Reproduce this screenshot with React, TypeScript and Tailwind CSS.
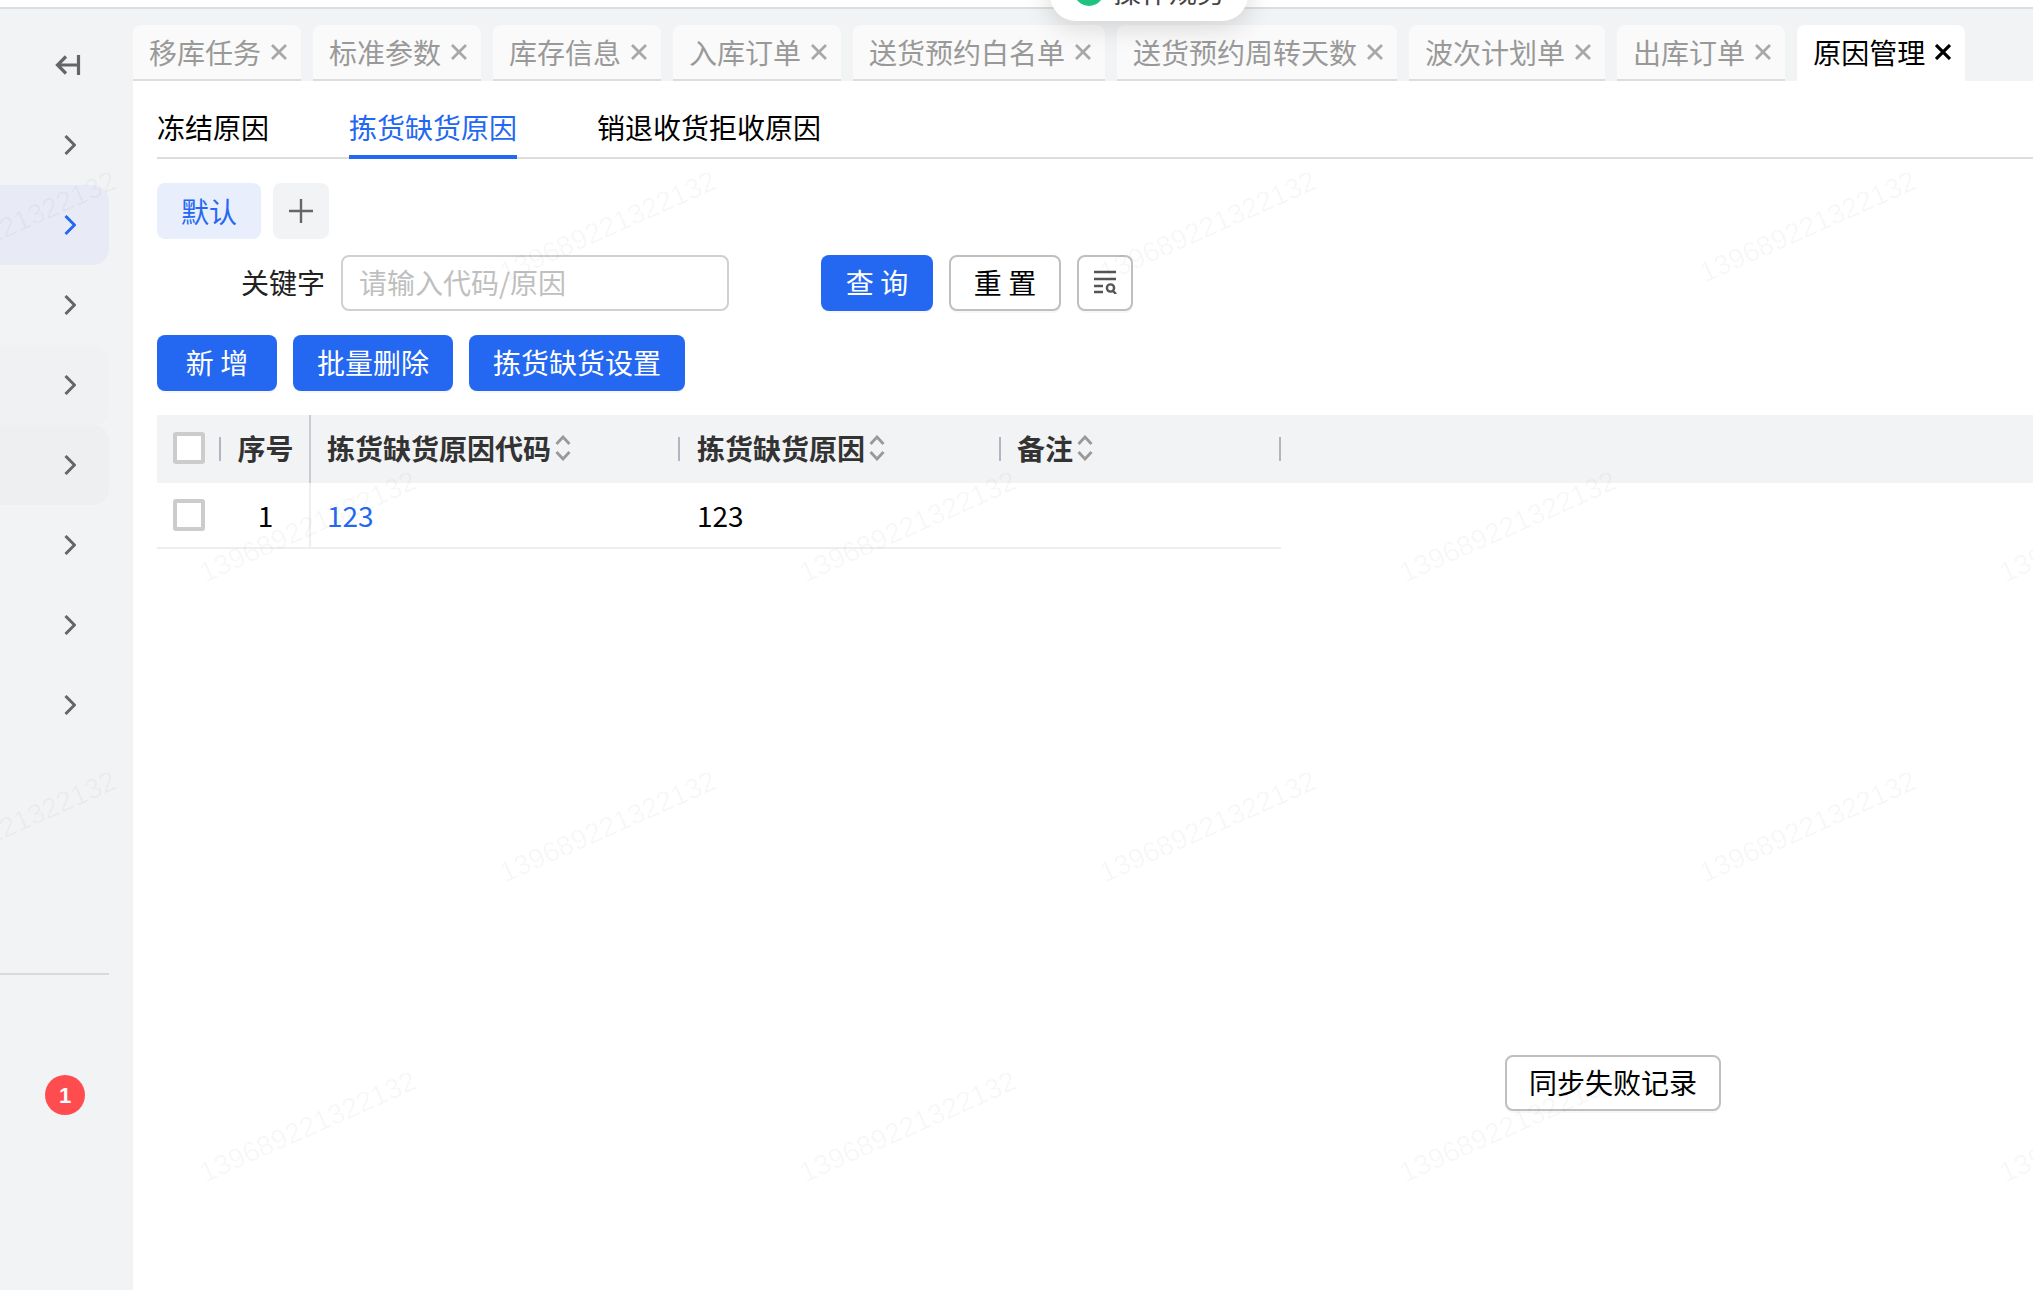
const tabs = [
  { label: '移库任务' },
  { label: '标准参数' },
  { label: '库存信息' },
  { label: '入库订单' },
  { label: '送货预约白名单' },
  { label: '送货预约周转天数' },
  { label: '波次计划单' },
  { label: '出库订单' },
  { label: '原因管理', active: true },
];

const sideRows = [
  '',
  'bg-[#e8ebf6]',
  '',
  'bg-[#f0f1f3]',
  'bg-[#eeeff1]',
  '',
  '',
  '',
];

const marks = [
  'left-[8px] top-[227px]',
  'left-[608px] top-[227px]',
  'left-[1208px] top-[227px]',
  'left-[1808px] top-[227px]',
  'left-[308px] top-[527px]',
  'left-[908px] top-[527px]',
  'left-[1508px] top-[527px]',
  'left-[2108px] top-[527px]',
  'left-[8px] top-[827px]',
  'left-[608px] top-[827px]',
  'left-[1208px] top-[827px]',
  'left-[1808px] top-[827px]',
  'left-[308px] top-[1127px]',
  'left-[908px] top-[1127px]',
  'left-[1508px] top-[1127px]',
  'left-[2108px] top-[1127px]',
];

const btnBase = 'h-14 pb-0.5 rounded-lg flex items-center justify-center text-[28px] shadow-[0_2px_0_rgba(0,0,0,0.03)] whitespace-pre';
const btnBlue = `${btnBase} bg-[#2468f2] text-white`;
const btnPlain = `${btnBase} bg-white text-black border-2 border-[#bfbfbf]`;

const Chevron = ({ active }: { active?: boolean }) => (
  <svg width="12" height="20" viewBox="0 0 12 20" fill="none" stroke={active ? '#2468f2' : '#666666'} strokeWidth="3">
    <path d="M1.5 1 L10.5 10 L1.5 19" />
  </svg>
);

const Close = ({ active }: { active?: boolean }) => (
  <svg width="16" height="16" viewBox="0 0 16 16" fill="none" stroke={active ? '#000000' : '#a8a8a8'} strokeWidth={active ? 3.2 : 2.8}>
    <path d="M1 1 L15 15 M15 1 L1 15" />
  </svg>
);

const Sorter = () => (
  <svg className="ml-1 shrink-0" width="16" height="26" viewBox="0 0 16 26" fill="none" stroke="#999999" strokeWidth="2.8">
    <path d="M1.5 9 L8 2 L14.5 9" />
    <path d="M1.5 17 L8 24 L14.5 17" />
  </svg>
);

const Checkbox = () => <div className="w-8 h-8 bg-white border-4 border-[#cccccc] rounded-[3px]" />;

const HeadDivider = () => <i className="block h-6 w-0.5 bg-[#b0b5c0] shrink-0" />;

export default function App() {
  return (
    <div className="relative w-[2033px] h-[1290px] overflow-hidden bg-white font-['Noto_Sans_CJK_SC','Noto_Sans',sans-serif] flex flex-col">
      <div className="h-[9px] shrink-0 bg-white border-b-2 border-[#dddddd]" />

      <div className="flex flex-1 min-h-0">
        {/* left menu, collapsed */}
        <aside className="w-[133px] shrink-0 bg-[#f2f3f5] flex flex-col">
          <div className="h-24 pt-[46px] pl-[55px]">
            <svg width="26" height="20" viewBox="0 0 26 20" fill="none" stroke="#666666" strokeWidth="3.2">
              <path d="M11 1.5 L2.5 10 L11 18.5 M2.5 10 H23 M23.5 0 V20" />
            </svg>
          </div>
          {sideRows.map((bg, i) => (
            <div key={i} className={`w-[109px] h-20 rounded-r-2xl flex items-center justify-end pr-[33px] ${bg}`}>
              <Chevron active={i === 1} />
            </div>
          ))}
          <div className="w-[109px] h-0.5 bg-[#d9d9d9] mt-[228px]" />
          <div className="mt-[100px] ml-[45px] w-10 h-10 rounded-full bg-[#ff4d4f] text-white text-[22px] font-bold font-['Liberation_Sans',sans-serif] flex items-center justify-center">
            1
          </div>
        </aside>

        <div className="flex-1 min-w-0 flex flex-col">
          <div className="h-[72px] shrink-0 bg-[#f2f3f5] pt-4 flex gap-3">
            {tabs.map(tab => (
              <div
                key={tab.label}
                className={`h-14 pl-4 pr-[14px] rounded-t-lg flex items-center gap-[10px] text-[28px] whitespace-nowrap border-b-2 ${
                  tab.active ? 'bg-white text-black border-transparent' : 'bg-[#fafafa] text-[#999999] border-[#dddddd]'
                }`}
              >
                {tab.label}
                <Close active={tab.active} />
              </div>
            ))}
          </div>

          <main className="flex-1 pl-6 flex flex-col items-start">
            <div className="w-full h-[78px] shrink-0 border-b-2 border-[#dddddd] flex items-end gap-20 text-[28px]">
              <div className="h-[62px] -mb-0.5 pt-px border-b-4 border-transparent text-black flex items-center">冻结原因</div>
              <div className="h-[62px] -mb-0.5 pt-px border-b-4 border-[#2468f2] text-[#2468f2] flex items-center">拣货缺货原因</div>
              <div className="h-[62px] -mb-0.5 pt-px border-b-4 border-transparent text-black flex items-center">销退收货拒收原因</div>
            </div>

            <div className="mt-6 flex gap-3">
              <div className="w-[104px] h-14 rounded-lg bg-[#e8eefc] text-[#2468f2] text-[28px] flex items-center justify-center">默认</div>
              <div className="w-14 h-14 rounded-lg bg-[#f2f3f5] flex items-center justify-center">
                <svg width="24" height="24" viewBox="0 0 24 24" fill="none" stroke="#666666" strokeWidth="2.4">
                  <path d="M12 0 V24 M0 12 H24" />
                </svg>
              </div>
            </div>

            <div className="mt-4 flex items-center">
              <label className="w-[168px] pb-0.5 text-right text-[28px] text-[#222222]">关键字</label>
              <div className="ml-4 w-[388px] h-14 pb-0.5 rounded-lg border-2 border-[#d0d0d0] pl-4 flex items-center text-[28px] text-[#bfbfbf]">
                请输入代码/原因
              </div>
              <button className={`${btnBlue} ml-[92px] w-28`}>查 询</button>
              <button className={`${btnPlain} ml-4 w-28`}>重 置</button>
              <button className={`${btnPlain} ml-4 w-14`}>
                <svg width="24" height="24" viewBox="0 0 24 24" fill="none" stroke="#555555" strokeWidth="2.4">
                  <path d="M1 2 H23 M1 9 H23 M1 16 H10 M1 22 H10" />
                  <circle cx="17.5" cy="18" r="3.6" />
                  <path d="M20 21 L23 24" />
                </svg>
              </button>
            </div>

            <div className="mt-6 flex gap-4">
              <button className={`${btnBlue} w-[120px]`}>新 增</button>
              <button className={`${btnBlue} w-40`}>批量删除</button>
              <button className={`${btnBlue} w-[216px]`}>拣货缺货设置</button>
            </div>

            <div className="mt-6 w-full">
              <div className="h-[68px] bg-[#f2f3f5] flex items-center text-[28px] font-bold text-[#333333]">
                <div className="w-16 h-full pl-4 flex items-center justify-between">
                  <div className="mb-0.5">
                    <Checkbox />
                  </div>
                  <HeadDivider />
                </div>
                <div className="w-[90px] h-full pb-0.5 pl-px border-r-2 border-[#c8ccd4] flex items-center justify-center">序号</div>
                <div className="w-[369px] h-full pl-4 flex items-center justify-between">
                  <span className="flex items-center pb-0.5">拣货缺货原因代码<Sorter /></span>
                  <HeadDivider />
                </div>
                <div className="w-[321px] h-full pl-[17px] flex items-center justify-between">
                  <span className="flex items-center pb-0.5">拣货缺货原因<Sorter /></span>
                  <HeadDivider />
                </div>
                <div className="w-[280px] h-full pl-4 flex items-center justify-between">
                  <span className="flex items-center pb-0.5">备注<Sorter /></span>
                  <HeadDivider />
                </div>
              </div>
              <div className="w-[1124px] h-[66px] border-b-2 border-[#eeeeee] flex items-center text-[28px] text-black">
                <div className="w-16 h-full pl-4 flex items-center">
                  <Checkbox />
                </div>
                <div className="w-[90px] h-full pl-px border-r-2 border-[#eeeeee] flex items-center justify-center">1</div>
                <div className="w-[369px] pl-4 text-[#2468f2]">123</div>
                <div className="w-[321px] pl-[17px]">123</div>
                <div className="w-[280px] pl-4" />
              </div>
            </div>

            <button className={`${btnPlain} mt-[506px] ml-[1348px] w-[216px]`}>同步失败记录</button>
          </main>
        </div>
      </div>

      {/* floating help pill, cut off by the window top */}
      <div className="absolute left-[1050px] top-[-35px] w-[198px] h-14 pb-1 rounded-[26px] bg-white shadow-[0_4px_28px_rgba(0,0,0,0.16)] pl-6 flex items-center gap-[9px] text-[28px] text-[#444444]">
        <span className="w-[30px] h-[30px] rounded-full bg-[#1fc27e] shrink-0" />
        <span className="whitespace-nowrap">操作规务</span>
      </div>

      {/* watermark */}
      <div className="absolute inset-0 overflow-hidden pointer-events-none">
        {marks.map(pos => (
          <span
            key={pos}
            className={`absolute ${pos} -translate-x-1/2 -translate-y-1/2 -rotate-[24deg] whitespace-nowrap text-[28px] font-['Liberation_Sans',sans-serif] text-black/[0.04]`}
          >
            139689221322132
          </span>
        ))}
      </div>
    </div>
  );
}
